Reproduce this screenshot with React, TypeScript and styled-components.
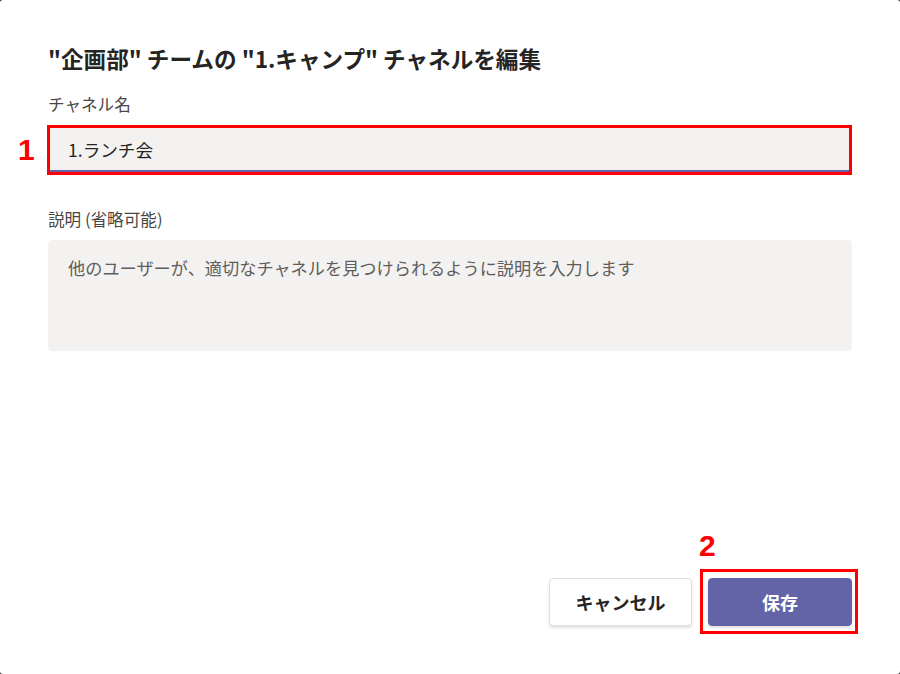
import styled, { createGlobalStyle } from "styled-components";

const GlobalStyle = createGlobalStyle`
    html, body {
        margin: 0;
        padding: 0;
        background: #3b3a39;
    }
    body {
        font-family: "Noto Sans CJK JP", "Noto Sans", sans-serif;
    }
`;

const Dialog = styled.div`
    width: 900px;
    height: 674px;
    box-sizing: border-box;
    background: #ffffff;
    border-radius: 3px;
    padding: 43px 48px 48px 48px;
    display: flex;
    flex-direction: column;
`;

const Title = styled.h1`
    margin: 0;
    font-size: 22.6px;
    font-weight: 700;
    line-height: 32px;
    color: #252423;
`;

const Label = styled.label`
    display: block;
    font-size: 16.6px;
    line-height: 22px;
    color: #484644;
`;

const Field = styled.div<{ $gap: number }>`
    margin-top: ${(props) => props.$gap}px;
    display: flex;
    flex-direction: column;
    gap: 10px;
`;

// 赤枠（注釈）
const Mark = styled.div`
    position: relative;
    border: 3px solid #ff0000;
    margin-left: -1px;
`;

const Num = styled.span`
    position: absolute;
    left: -32px;
    top: 50%;
    transform: translateY(-50%);
    color: #ff0000;
    font-family: "Liberation Sans", Arial, sans-serif;
    font-weight: 700;
    font-size: 30px;
`;

const Input = styled.div`
    height: 44px;
    box-sizing: border-box;
    background: #f3f2f1;
    border-bottom: 2px solid #6264a7;
    padding: 0 18px;
    display: flex;
    align-items: center;
    font-size: 17.6px;
    color: #252423;
`;

const TextArea = styled.div`
    height: 111px;
    box-sizing: border-box;
    background: #f3f2f1;
    border-radius: 4px;
    padding: 15px 20px;
    font-size: 17.2px;
    line-height: 26px;
    color: #605e5c;
`;

const Footer = styled.div`
    margin-top: auto;
    display: flex;
    justify-content: flex-end;
    align-items: flex-end;
    gap: 16px;
`;

const Button = styled.button<{ $primary?: boolean }>`
    width: ${(props) => (props.$primary ? 144 : 143)}px;
    height: 48px;
    border-radius: 4px;
    border: 1px solid ${(props) => (props.$primary ? "#6264a7" : "#e1dfdd")};
    background: ${(props) => (props.$primary ? "#6264a7" : "#ffffff")};
    color: ${(props) => (props.$primary ? "#ffffff" : "#252423")};
    box-shadow: 0 2px 3px rgba(0, 0, 0, 0.12);
    font-family: "Noto Sans CJK JP", sans-serif;
    font-size: 18px;
    font-weight: 700;
    cursor: pointer;
`;

const SaveMark = styled.div`
    position: relative;
    border: 3px solid #ff0000;
    padding: 6px 3px 5px 5px;
    margin: 0 -6px -8px -8px;
`;

const SaveNum = styled.span`
    position: absolute;
    left: -4px;
    top: -43px;
    color: #ff0000;
    font-family: "Liberation Sans", Arial, sans-serif;
    font-weight: 700;
    font-size: 30px;
`;

function App() {
    return (
        <>
            <GlobalStyle />
            <Dialog>
                <Title>"企画部" チームの "1.キャンプ" チャネルを編集</Title>
                <Field $gap={18}>
                    <Label>チャネル名</Label>
                    <Mark>
                        <Num>1</Num>
                        <Input>1.ランチ会</Input>
                    </Mark>
                </Field>
                <Field $gap={33}>
                    <Label>説明 (省略可能)</Label>
                    <TextArea>他のユーザーが、適切なチャネルを見つけられるように説明を入力します</TextArea>
                </Field>
                <Footer>
                    <Button>キャンセル</Button>
                    <SaveMark>
                        <SaveNum>2</SaveNum>
                        <Button $primary>保存</Button>
                    </SaveMark>
                </Footer>
            </Dialog>
        </>
    );
}

export default App;
